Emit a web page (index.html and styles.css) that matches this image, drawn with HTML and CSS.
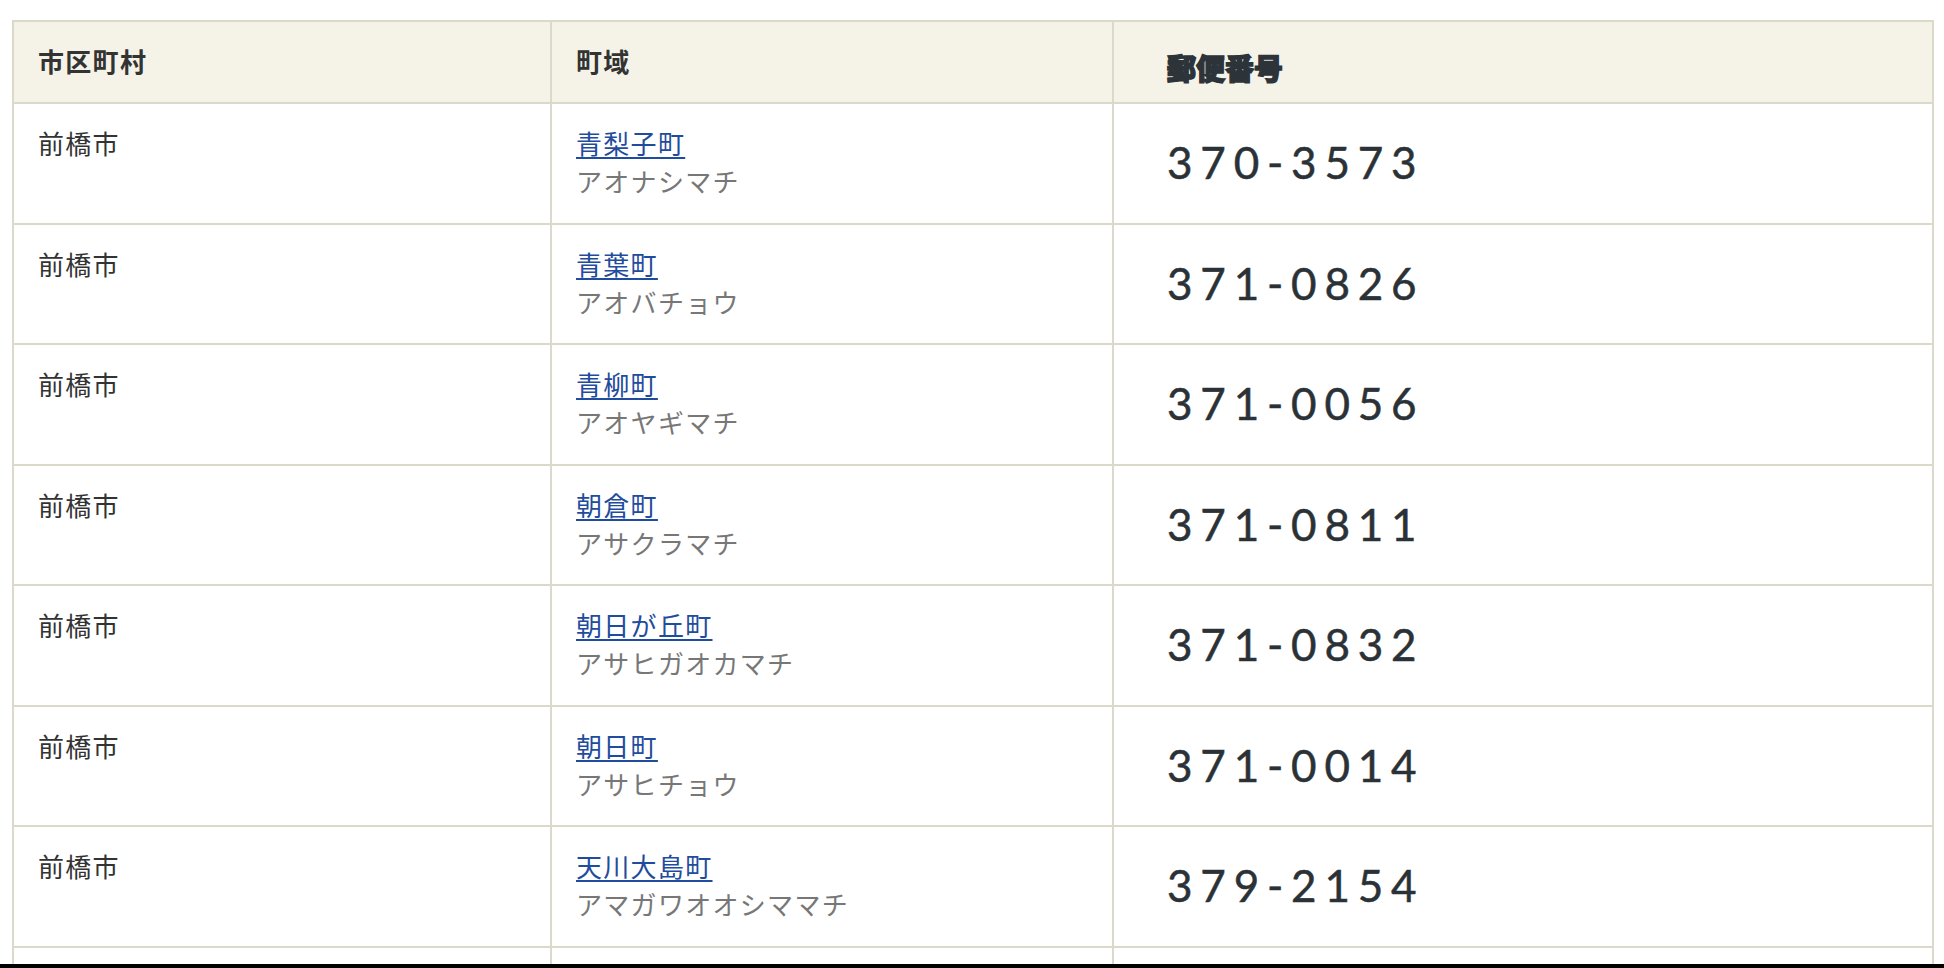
FILE: index.html
```html
<!DOCTYPE html>
<html lang="ja">
<head>
<meta charset="utf-8">
<title>郵便番号一覧</title>
<link rel="stylesheet" href="styles.css">
</head>
<body>
<table class="zip-table">
  <colgroup>
    <col class="col-city">
    <col class="col-town">
    <col class="col-code">
  </colgroup>
  <thead>
    <tr>
      <th>市区町村</th>
      <th>町域</th>
      <th class="th-code">郵便番号</th>
    </tr>
  </thead>
  <tbody>
    <tr>
      <td>前橋市</td>
      <td><a href="#" class="town">青梨子町</a><div class="kana">アオナシマチ</div></td>
      <td class="code">370-3573</td>
    </tr>
    <tr>
      <td>前橋市</td>
      <td><a href="#" class="town">青葉町</a><div class="kana">アオバチョウ</div></td>
      <td class="code">371-0826</td>
    </tr>
    <tr>
      <td>前橋市</td>
      <td><a href="#" class="town">青柳町</a><div class="kana">アオヤギマチ</div></td>
      <td class="code">371-0056</td>
    </tr>
    <tr>
      <td>前橋市</td>
      <td><a href="#" class="town">朝倉町</a><div class="kana">アサクラマチ</div></td>
      <td class="code">371-0811</td>
    </tr>
    <tr>
      <td>前橋市</td>
      <td><a href="#" class="town">朝日が丘町</a><div class="kana">アサヒガオカマチ</div></td>
      <td class="code">371-0832</td>
    </tr>
    <tr>
      <td>前橋市</td>
      <td><a href="#" class="town">朝日町</a><div class="kana">アサヒチョウ</div></td>
      <td class="code">371-0014</td>
    </tr>
    <tr>
      <td>前橋市</td>
      <td><a href="#" class="town">天川大島町</a><div class="kana">アマガワオオシママチ</div></td>
      <td class="code">379-2154</td>
    </tr>
    <tr class="row-partial">
      <td></td>
      <td></td>
      <td></td>
    </tr>
  </tbody>
</table>
<div class="bottom-edge"></div>
</body>
</html>
```

FILE: styles.css
```css
html, body {
  margin: 0;
  background: #ffffff;
}
body {
  padding: 20px 12px 0 12px;
  font-family: "Noto Sans CJK JP", "Noto Sans", sans-serif;
  color: #333333;
  overflow: hidden;
  height: 968px;
  box-sizing: border-box;
}
.zip-table {
  border-collapse: collapse;
  table-layout: fixed;
  width: 1920px;
  border: 2px solid #dbd9c9;
}
.col-city { width: 538px; }
.col-town { width: 562px; }
.col-code { width: 820px; }

.zip-table th,
.zip-table td {
  border: 2px solid #dbd9c9;
  text-align: left;
  vertical-align: top;
  font-size: 26px;
  line-height: 38px;
  letter-spacing: 1.3px;
}
.zip-table th {
  background: #f5f3e8;
  font-weight: 700;
  padding: 20px 24px 22px 24px;
  color: #333333;
}
.zip-table th.th-code {
  padding: 26px 24px 16px 53px;
  font-size: 29px;
  font-weight: 900;
  color: #2d3439;
  letter-spacing: 0;
  -webkit-text-stroke: 1.4px #2d3439;
}
.zip-table td {
  padding: 20px 24px 22.5px 24px;
  color: #333333;
}
.row-partial td {
  height: 40px;
}
.town {
  color: #1f4c9c;
  text-decoration: underline;
  text-decoration-thickness: 2px;
  text-underline-offset: 3px;
}
.kana {
  color: #777777;
}
.zip-table td.code {
  vertical-align: middle;
  padding-left: 53px;
  font-family: "Lato", "Open Sans", sans-serif;
  font-size: 44px;
  line-height: 50px;
  letter-spacing: 7.8px;
  color: #2b3237;
  -webkit-text-stroke: 0.5px #2b3237;
}
.bottom-edge {
  position: fixed;
  left: 0;
  right: 0;
  bottom: 0;
  height: 4px;
  background: #000000;
}
```
